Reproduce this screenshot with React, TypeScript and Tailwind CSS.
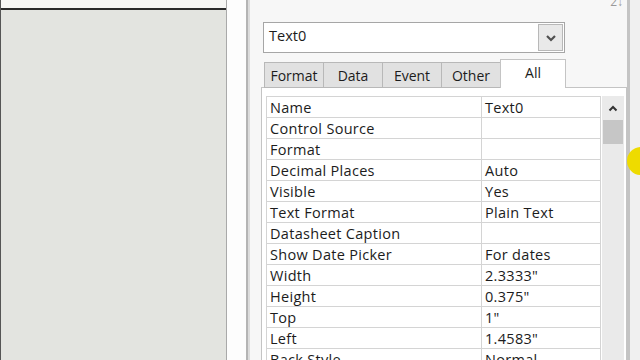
const rows: [string, string][] = [
  ["Name", "Text0"],
  ["Control Source", ""],
  ["Format", ""],
  ["Decimal Places", "Auto"],
  ["Visible", "Yes"],
  ["Text Format", "Plain Text"],
  ["Datasheet Caption", ""],
  ["Show Date Picker", "For dates"],
  ["Width", "2.3333\""],
  ["Height", "0.375\""],
  ["Top", "1\""],
  ["Left", "1.4583\""],
  ["Back Style", "Normal"],
];

const tabs = ["Format", "Data", "Event", "Other"];

export default function App() {
  return (
    <div
      className="relative flex h-[360px] w-[640px] overflow-hidden bg-[#f7f7f7] text-[#1c1c1c]"
      style={{ fontFamily: '"Open Sans", "Noto Sans", sans-serif' }}
    >
      {/* form design area, left */}
      <div className="flex w-[227px] shrink-0 flex-col border-l border-r border-l-[#555] border-r-[#a9a9a9]">
        <div className="h-[8px] shrink-0 bg-[#f7f7f5]" />
        <div className="h-[2px] shrink-0 bg-[#2b2b2b]" />
        <div className="flex-1 bg-[#e3e4e0]" />
      </div>
      <div className="w-[19px] shrink-0 bg-[#fdfdfd]" />
      <div className="w-[4px] shrink-0 border-l-2 border-[#b4b4b4] bg-[#dcdcdc]" />

      {/* property sheet */}
      <div className="flex w-[380px] shrink-0 flex-col border-r-[3px] border-[#c4c4c4]">
        <div className="flex h-[22px] shrink-0 justify-end pr-[4px]">
          <span className="-mt-[4px] text-[12px] leading-[12px] text-[#9a9a9a]">2↓</span>
        </div>

        <div className="ml-[13px] flex h-[31px] w-[302px] shrink-0 items-center border border-[#a6a6a6] bg-white pl-[5px] pr-[1px]">
          <span className="flex-1 pb-[3px] text-[14.5px] leading-none">Text0</span>
          <div className="flex h-[27px] w-[25px] items-center justify-center border border-[#b8b8b8] bg-[#e9e9e9]">
            <svg width="12" height="8" viewBox="0 0 12 8">
              <path d="M2 2 L6 6 L10 2" fill="none" stroke="#505050" strokeWidth="2.2" />
            </svg>
          </div>
        </div>

        <div className="relative z-10 -mb-px ml-[14px] mt-[6px] flex h-[29px] shrink-0 items-end">
          {tabs.map((t) => (
            <div
              key={t}
              className="-mr-px flex h-[26px] w-[60px] items-center justify-center border border-[#b8b8b8] bg-[#e1e1e1] pt-[1px] text-[14px] leading-none"
            >
              {t}
            </div>
          ))}
          <div className="flex h-[29px] w-[66px] items-start justify-center border border-b-0 border-[#c4c4c4] bg-white pt-[6px] text-[14px] leading-none">
            All
          </div>
        </div>

        <div className="ml-[11px] flex min-h-0 flex-1 overflow-hidden border border-b-0 border-[#c4c4c4] bg-white pl-[4px] pt-[8px]">
          <div className="w-[335px] shrink-0 self-start border-l border-t border-[#d4d4d4]">
            {rows.map(([k, v]) => (
              <div key={k} className="flex h-[21px] border-b border-[#d4d4d4] text-[14.5px] tracking-[0.3px]">
                <div className="w-[215px] overflow-hidden border-r border-[#d4d4d4] pl-[3px] leading-[22px]">
                  {k}
                </div>
                <div className="w-[119px] overflow-hidden border-r border-[#d4d4d4] pl-[3px] leading-[22px]">
                  {v}
                </div>
              </div>
            ))}
          </div>
          <div className="ml-[1px] flex w-[22px] shrink-0 flex-col items-center bg-[#eaeaea]">
            <div className="flex h-[24px] items-center justify-center">
              <svg width="10" height="7" viewBox="0 0 10 7">
                <path d="M1.5 5.5 L5 2 L8.5 5.5" fill="none" stroke="#333" strokeWidth="2" />
              </svg>
            </div>
            <div className="h-[24px] w-[20px] bg-[#c6c6c6]" />
          </div>
        </div>
      </div>
      <div className="flex-1 bg-[#f0f0f0]" />

      {/* cursor highlight */}
      <div className="absolute left-[627px] top-[147px] h-[28px] w-[28px] rounded-full bg-[#eedb00]" />
    </div>
  );
}
